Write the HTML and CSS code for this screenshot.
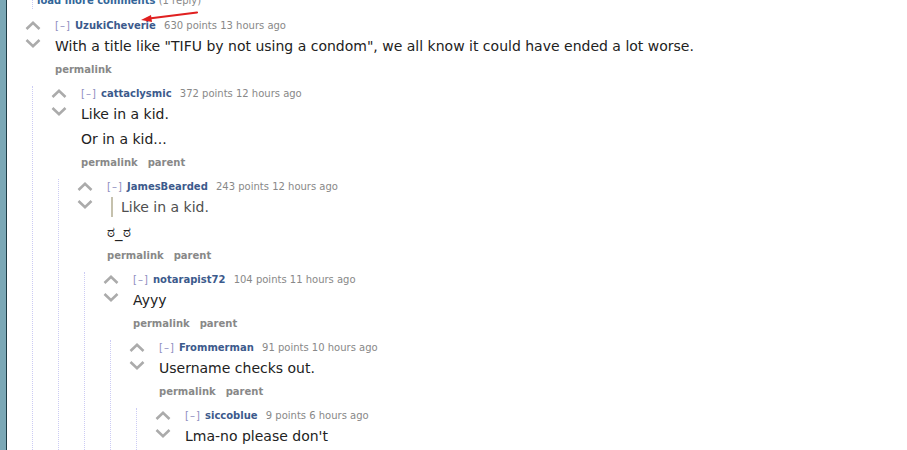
FILE: index.html
```html
<!DOCTYPE html>
<html lang="en">
<head>
    <meta charset="UTF-8">
    <meta name="viewport" content="width=device-width, initial-scale=1.0">
    <title>comments</title>
    <link rel="stylesheet" href="styles.css">
</head>
<body>
    <div class="page">
        <div class="side"></div>
        <div class="content">
            <div class="child top-child">
                <div class="more"><a href="#">load more comments</a> <span class="gray">(1 reply)</span></div>
            </div>

            <div class="comment first">
                <div class="midcol">
                    <svg class="arrow" width="16" height="9" viewBox="0 0 16 9"><polyline points="1.5,8 8,1.8 14.5,8"/></svg>
                    <svg class="arrow" width="16" height="9" viewBox="0 0 16 9"><polyline points="1.5,1 8,7.2 14.5,1"/></svg>
                </div>
                <div class="entry">
                    <p class="tagline"><a class="expand" href="#">[–]</a> <a class="author" href="#">UzukiCheverie</a> <span class="score">630 points</span> 13 hours ago</p>
                    <div class="md"><p>With a title like "TIFU by not using a condom", we all know it could have ended a lot worse.</p></div>
                    <ul class="buttons"><li><a href="#">permalink</a></li></ul>
                </div>
                <div class="child">

                    <div class="comment">
                        <div class="midcol">
                            <svg class="arrow" width="16" height="9" viewBox="0 0 16 9"><polyline points="1.5,8 8,1.8 14.5,8"/></svg>
                            <svg class="arrow" width="16" height="9" viewBox="0 0 16 9"><polyline points="1.5,1 8,7.2 14.5,1"/></svg>
                        </div>
                        <div class="entry">
                            <p class="tagline"><a class="expand" href="#">[–]</a> <a class="author" href="#">cattaclysmic</a> <span class="score">372 points</span> 12 hours ago</p>
                            <div class="md"><p>Like in a kid.</p><p>Or in a kid...</p></div>
                            <ul class="buttons"><li><a href="#">permalink</a></li><li><a href="#">parent</a></li></ul>
                        </div>
                        <div class="child">

                            <div class="comment">
                                <div class="midcol">
                                    <svg class="arrow" width="16" height="9" viewBox="0 0 16 9"><polyline points="1.5,8 8,1.8 14.5,8"/></svg>
                                    <svg class="arrow" width="16" height="9" viewBox="0 0 16 9"><polyline points="1.5,1 8,7.2 14.5,1"/></svg>
                                </div>
                                <div class="entry">
                                    <p class="tagline"><a class="expand" href="#">[–]</a> <a class="author" href="#">JamesBearded</a> <span class="score">243 points</span> 12 hours ago</p>
                                    <div class="md"><blockquote><p>Like in a kid.</p></blockquote><p class="face">ಠ_ಠ</p></div>
                                    <ul class="buttons"><li><a href="#">permalink</a></li><li><a href="#">parent</a></li></ul>
                                </div>
                                <div class="child">

                                    <div class="comment">
                                        <div class="midcol">
                                            <svg class="arrow" width="16" height="9" viewBox="0 0 16 9"><polyline points="1.5,8 8,1.8 14.5,8"/></svg>
                                            <svg class="arrow" width="16" height="9" viewBox="0 0 16 9"><polyline points="1.5,1 8,7.2 14.5,1"/></svg>
                                        </div>
                                        <div class="entry">
                                            <p class="tagline"><a class="expand" href="#">[–]</a> <a class="author" href="#">notarapist72</a> <span class="score">104 points</span> 11 hours ago</p>
                                            <div class="md"><p>Ayyy</p></div>
                                            <ul class="buttons"><li><a href="#">permalink</a></li><li><a href="#">parent</a></li></ul>
                                        </div>
                                        <div class="child">

                                            <div class="comment">
                                                <div class="midcol">
                                                    <svg class="arrow" width="16" height="9" viewBox="0 0 16 9"><polyline points="1.5,8 8,1.8 14.5,8"/></svg>
                                                    <svg class="arrow" width="16" height="9" viewBox="0 0 16 9"><polyline points="1.5,1 8,7.2 14.5,1"/></svg>
                                                </div>
                                                <div class="entry">
                                                    <p class="tagline"><a class="expand" href="#">[–]</a> <a class="author" href="#">Frommerman</a> <span class="score">91 points</span> 10 hours ago</p>
                                                    <div class="md"><p>Username checks out.</p></div>
                                                    <ul class="buttons"><li><a href="#">permalink</a></li><li><a href="#">parent</a></li></ul>
                                                </div>
                                                <div class="child">

                                                    <div class="comment">
                                                        <div class="midcol">
                                                            <svg class="arrow" width="16" height="9" viewBox="0 0 16 9"><polyline points="1.5,8 8,1.8 14.5,8"/></svg>
                                                            <svg class="arrow" width="16" height="9" viewBox="0 0 16 9"><polyline points="1.5,1 8,7.2 14.5,1"/></svg>
                                                        </div>
                                                        <div class="entry">
                                                            <p class="tagline"><a class="expand" href="#">[–]</a> <a class="author" href="#">siccoblue</a> <span class="score">9 points</span> 6 hours ago</p>
                                                            <div class="md"><p>Lma-no please don't</p></div>
                                                            <ul class="buttons"><li><a href="#">permalink</a></li><li><a href="#">parent</a></li></ul>
                                                        </div>
                                                    </div>

                                                </div>
                                            </div>

                                        </div>
                                    </div>

                                </div>
                            </div>

                        </div>
                    </div>

                </div>
            </div>

            <!-- red marker drawn on top of the screenshot -->
            <svg class="marker" width="64" height="14" viewBox="0 0 64 14">
                <line x1="60" y1="1.5" x2="12" y2="7.5" stroke="#e02020" stroke-width="2.2" stroke-linecap="round"/>
                <polygon points="4,9 14,4 15,11" fill="#e02020"/>
            </svg>
        </div>
    </div>
</body>
</html>
```

FILE: styles.css
```css
html, body {
    margin: 0;
    padding: 0;
    background: #ffffff;
    overflow: hidden;
}

body {
    font-family: "DejaVu Sans", Verdana, sans-serif;
    color: #222222;
}

a {
    text-decoration: none;
}

.page {
    display: flex;
    min-height: 100vh;
}

.side {
    width: 6px;
    flex: none;
    background-color: #7ba8b6;
    border-right: 1px solid #1f3c45;
}

.content {
    flex: 1;
    position: relative;
    padding-left: 17px;
}

/* nested replies */
.child {
    margin: 8px 0 0 8px;
    padding-left: 17px;
    border-left: 1px dotted #ccccf4;
}

.top-child {
    margin-top: -7px;
    padding-left: 4px;
}

.more {
    font-size: 10px;
    line-height: 16px;
}

.more a {
    color: #336699;
    font-weight: bold;
}

.gray {
    color: #888888;
}

.comment {
    display: grid;
    grid-template-columns: 31px 1fr;
}

.comment.first {
    margin-top: 9px;
}

.comment > .child {
    grid-column: 1 / -1;
}

.midcol {
    display: flex;
    flex-direction: column;
    padding: 3px 0 0 1px;
}

.arrow {
    display: block;
    margin-bottom: 9px;
}

.arrow polyline {
    fill: none;
    stroke: #ababab;
    stroke-width: 2.6;
}

.tagline {
    margin: 0;
    font-size: 10px;
    line-height: 16px;
    color: #888888;
}

.tagline .expand {
    color: #8e8ebf;
    letter-spacing: 1px;
}

.tagline .author {
    color: #3c5a8c;
    font-weight: bold;
    margin: 0 5px 0 1px;
}

.md {
    padding-top: 2px;
    font-size: 14px;
}

.md p {
    margin: 0 0 5px;
    line-height: 20px;
}

.md .face {
    font-size: 15px;
}

.md blockquote {
    margin: 0 0 5px 4px;
    padding: 0 8px;
    border-left: 2px solid #c5c1ad;
    color: #4f4f4f;
}

.md blockquote p {
    margin: 0;
}

.buttons {
    list-style: none;
    margin: 0;
    padding: 1px 0 0;
    display: flex;
    gap: 10px;
    font-size: 10px;
    line-height: 16px;
}

.buttons a {
    color: #888888;
    font-weight: bold;
}

.marker {
    position: absolute;
    left: 130px;
    top: 11px;
}
```
